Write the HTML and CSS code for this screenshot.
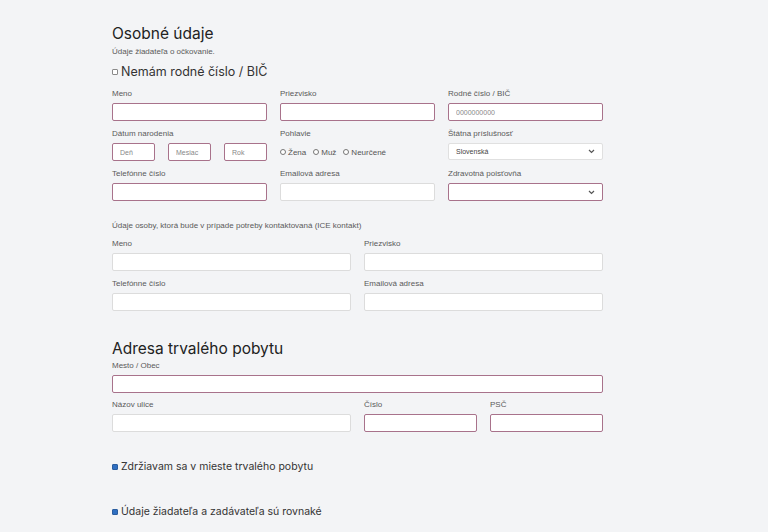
FILE: index.html
```html
<!DOCTYPE html>
<html lang="sk">
<head>
<meta charset="utf-8">
<link rel="stylesheet" href="styles.css">
</head>
<body>
<main class="form">
  <h2 class="title">Osobné údaje</h2>
  <p class="subtitle">Údaje žiadateľa o očkovanie.</p>
  <label class="check big"><input type="checkbox" class="cb"> Nemám rodné číslo / BIČ</label>

  <div class="grid g3">
    <div class="field"><label>Meno</label><input class="inp bad"></div>
    <div class="field"><label>Priezvisko</label><input class="inp bad"></div>
    <div class="field"><label>Rodné číslo / BIČ</label><input class="inp bad" placeholder="0000000000"></div>

    <div class="field"><label>Dátum narodenia</label>
      <div class="date">
        <input class="inp bad" placeholder="Deň">
        <input class="inp bad" placeholder="Mesiac">
        <input class="inp bad" placeholder="Rok">
      </div>
    </div>
    <div class="field"><label>Pohlavie</label>
      <div class="radios">
        <span class="radio"><i class="dot"></i>Žena</span>
        <span class="radio"><i class="dot"></i>Muž</span>
        <span class="radio"><i class="dot"></i>Neurčené</span>
      </div>
    </div>
    <div class="field"><label>Štátna príslušnosť</label>
      <div class="select"><span>Slovenská</span><svg width="7" height="5" viewBox="0 0 7 5"><path d="M1 1l2.5 2.5L6 1" fill="none" stroke="#555" stroke-width="1.2"/></svg></div>
    </div>

    <div class="field"><label>Telefónne číslo</label><input class="inp bad"></div>
    <div class="field"><label>Emailová adresa</label><input class="inp"></div>
    <div class="field"><label>Zdravotná poisťovňa</label>
      <div class="select sel-bad"><span></span><svg width="7" height="5" viewBox="0 0 7 5"><path d="M1 1l2.5 2.5L6 1" fill="none" stroke="#555" stroke-width="1.2"/></svg></div>
    </div>
  </div>

  <p class="note">Údaje osoby, ktorá bude v prípade potreby kontaktovaná (ICE kontakt)</p>
  <div class="grid g2">
    <div class="field"><label>Meno</label><input class="inp"></div>
    <div class="field"><label>Priezvisko</label><input class="inp"></div>
    <div class="field"><label>Telefónne číslo</label><input class="inp"></div>
    <div class="field"><label>Emailová adresa</label><input class="inp"></div>
  </div>

  <h2 class="title t2">Adresa trvalého pobytu</h2>
  <div class="grid g4">
    <div class="field span4"><label>Mesto / Obec</label><input class="inp bad"></div>
    <div class="field span2"><label>Názov ulice</label><input class="inp"></div>
    <div class="field"><label>Číslo</label><input class="inp bad"></div>
    <div class="field"><label>PSČ</label><input class="inp bad"></div>
  </div>

  <label class="check c1"><input type="checkbox" class="cb" checked> Zdržiavam sa v mieste trvalého pobytu</label>
  <label class="check c2"><input type="checkbox" class="cb" checked> Údaje žiadateľa a zadávateľa sú rovnaké</label>
</main>
</body>
</html>
```

FILE: styles.css
```css
html, body {
  margin: 0;
  padding: 0;
  background: #f3f4f6;
}
body {
  font-family: "Liberation Sans", Arial, sans-serif;
  color: #444;
}
.form {
  width: 491px;
  margin-left: 112px;
  padding-top: 24px;
}
.title {
  font-family: Inter, "Noto Sans", sans-serif;
  font-weight: 400;
  font-size: 15.5px;
  line-height: 20px;
  color: #222;
  margin: 0;
}
.subtitle {
  margin: 2px 0 0;
  font-size: 8px;
  line-height: 12px;
  color: #5a5a5a;
}
.check {
  display: flex;
  align-items: center;
  font-family: Inter, "Noto Sans", sans-serif;
  font-size: 10.5px;
  color: #333;
}
.check.big {
  margin-top: 6px;
  font-size: 12.5px;
  line-height: 16px;
}
.cb {
  appearance: none;
  -webkit-appearance: none;
  width: 6px;
  height: 6px;
  margin: 0 3px 0 0;
  border: 1px solid #8a8a8a;
  border-radius: 1px;
  background: #fff;
  box-sizing: border-box;
}
.cb:checked {
  background: #2f6fc1;
  border-color: #2a5d9f;
}
.grid {
  display: grid;
  column-gap: 13px;
  row-gap: 7px;
}
.g3 { grid-template-columns: 1fr 1fr 1fr; margin-top: 8px; }
.g2 { grid-template-columns: 1fr 1fr; margin-top: 6px; }
.g4 { grid-template-columns: 1fr 1fr 1fr 1fr; margin-top: 1px; row-gap: 6px; }
.span4 { grid-column: span 4; }
.span2 { grid-column: span 2; }
.field label {
  display: block;
  font-size: 8px;
  line-height: 12px;
  color: #5a5a5a;
  margin-bottom: 3px;
}
.inp {
  display: block;
  width: 100%;
  height: 18px;
  box-sizing: border-box;
  border: 1px solid #dcdcdc;
  border-radius: 2px;
  background: #fff;
  padding: 0 7px;
  font-family: "Liberation Sans", Arial, sans-serif;
  font-size: 7px;
  color: #444;
  margin: 0;
}
.inp::placeholder { color: #888; }
.inp.bad { border-color: #a8728b; }
.date {
  display: grid;
  grid-template-columns: 43px 43px 43px;
  justify-content: space-between;
}
.radios {
  display: flex;
  align-items: center;
  gap: 7px;
  height: 18px;
  font-size: 8px;
  color: #555;
}
.radio { display: flex; align-items: center; }
.dot {
  width: 4px;
  height: 4px;
  border: 1px solid #777;
  border-radius: 50%;
  margin-right: 2px;
  background: #fff;
}
.select {
  display: flex;
  align-items: center;
  justify-content: space-between;
  height: 17px;
  margin-top: 1px;
  box-sizing: border-box;
  border: 1px solid #e0e0e0;
  border-radius: 2px;
  background: #fff;
  padding: 0 7px;
  font-size: 7px;
  color: #444;
}
.sel-bad { border-color: #a8728b; height: 18px; margin-top: 0; }
.note {
  margin: 19px 0 0;
  font-size: 8px;
  line-height: 12px;
  color: #5a5a5a;
}
.t2 { margin-top: 28px; }
.c1 { margin-top: 28px; line-height: 14px; }
.c2 { margin-top: 31px; line-height: 14px; }
```
